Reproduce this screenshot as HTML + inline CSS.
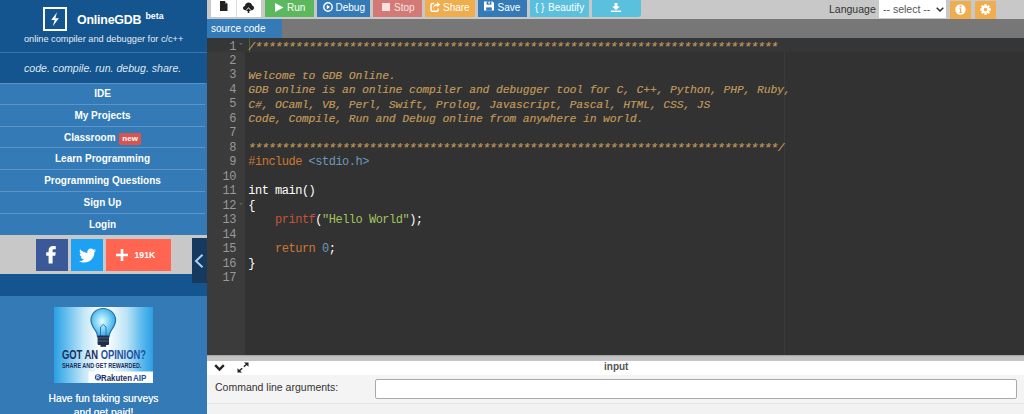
<!DOCTYPE html>
<html><head><meta charset="utf-8">
<style>
*{box-sizing:border-box;margin:0;padding:0}
html,body{width:1024px;height:414px;overflow:hidden;background:#f4f4f4;font-family:"Liberation Sans",sans-serif}
.a{position:absolute}
svg{display:block}
#sb{left:0;top:0;width:207px;height:414px;background:#337ab7}
#hdr{left:0;top:0;width:207px;height:83px;background:#14558f}
#sep{left:0;top:52px;width:207px;height:1px;background:#3a76ad}
.logo{left:43px;top:7px;width:24px;height:24px;border:2px solid #fff}
.title{left:77px;top:12.5px;color:#fff;font-weight:bold;font-size:12.4px;letter-spacing:-0.2px;white-space:nowrap;line-height:15.5px}
.beta{left:145.5px;top:11px;color:#fff;font-weight:bold;font-size:8.8px;line-height:10px}
.sub{left:24px;top:33.5px;color:#e6ecf2;font-size:9.2px;white-space:nowrap;line-height:11px}
.slogan{left:24px;top:61.8px;color:#dfe7ef;font-style:italic;font-size:10.6px;white-space:nowrap;line-height:12px}
.mi{position:absolute;left:0;width:205px;color:#fff;font-weight:bold;font-size:10px;text-align:center;border-top:1px solid #5d95c8;line-height:21.6px}
.new{display:inline-block;background:#d9534f;color:#fff;font-size:8px;line-height:12px;height:12px;width:22px;text-align:center;border-radius:1px;vertical-align:0px;margin-left:3.5px}
#gray{left:0;top:235px;width:207px;height:39px;background:#c8c8c8}
#dband{left:0;top:274px;width:207px;height:22px;background:#14558f}
#collapse{left:192px;top:237.5px;width:15px;height:45px;background:#163a5e}
#tb{left:207px;top:0;width:817px;height:19px;background:#c8c8c8}
.btn{position:absolute;top:0;height:17px;color:#fff;font-size:10px;white-space:nowrap;line-height:15.5px}
.btn span{position:absolute;top:0}
.btn svg{position:absolute}
#tabrow{left:207px;top:19px;width:817px;height:19px;background:#777}
#tab{left:207px;top:19px;width:75px;height:19px;background:#337ab7;color:#fff;font-size:10px;line-height:19px;padding-left:4px}
#ed{left:207px;top:38px;width:817px;height:317px;background:#323232}
#gut{left:207px;top:38px;width:38px;height:317px;background:#3b3b3b}
#al{left:245px;top:38px;width:779px;height:14.47px;background:#353637}
#gal{left:207px;top:38px;width:38px;height:14.47px;background:#353637}
#pm{left:784px;top:38px;width:1px;height:317px;background:#3b3b3b}
#cursor{left:249px;top:38px;width:1px;height:14px;background:#91ff00;opacity:.22}
.code{position:absolute;left:248.3px;top:39.5px;font-family:"Liberation Mono",monospace;font-size:12px;letter-spacing:-0.5px;line-height:14.47px;color:#fff;white-space:pre}
.ln{position:absolute;left:207px;top:39.5px;width:29px;text-align:right;font-family:"Liberation Mono",monospace;font-size:12px;letter-spacing:-0.5px;line-height:14.47px;color:#999;white-space:pre}
.c{color:#bc9458;font-style:italic;font-size:11.2px;letter-spacing:-0.02px;position:relative;top:0.5px;text-shadow:0.3px 0 0 rgba(188,148,88,.6)}
.k{color:#cc7833}
.n{color:#6c99bb}
.s{color:#a5c261}
.f{color:#c2553a}
.st{font-size:13.5px;letter-spacing:-1.4px;position:relative;top:1px;left:-0.7px}
.fold{position:absolute;left:239px;width:0;height:0;border-left:2.5px solid transparent;border-right:2.5px solid transparent;border-top:2.5px solid #626255}
#bar{left:207px;top:355px;width:817px;height:6px;background:linear-gradient(#9c9c9c,#c4c4c4 30%,#c4c4c4)}
#ihdr{left:207px;top:361px;width:817px;height:14px;background:#fff}
#ibody{left:207px;top:375px;width:817px;height:28px;background:#f4f4f4}
#iline{left:207px;top:403px;width:817px;height:1px;background:#e3e3e3}
#ibot{left:207px;top:404px;width:817px;height:10px;background:#f2f2f2}
.inp{left:375px;top:379px;width:642px;height:20px;background:#fff;border:1px solid #a9a9a9;border-radius:2px}
</style></head><body>
<div id="sb" class="a"></div>
<div id="hdr" class="a"></div>
<div id="sep" class="a"></div>
<div class="a logo"><svg width="20" height="20" viewBox="0 0 20 20"><path d="M12 3.3 L6.2 11 L9.6 11 L7.8 17.2 L13.9 9.2 L10.4 9.2 Z" fill="#fff"/></svg></div>
<div class="a title">OnlineGDB</div>
<div class="a beta">beta</div>
<div class="a sub">online compiler and debugger for c/c++</div>
<div class="a slogan">code. compile. run. debug. share.</div>

<div class="mi" style="top:83px;height:21px;line-height:20px">IDE</div>
<div class="mi" style="top:104px;height:22px">My Projects</div>
<div class="mi" style="top:126px;height:21px">Classroom<span class="new">new</span></div>
<div class="mi" style="top:147px;height:22px">Learn Programming</div>
<div class="mi" style="top:169px;height:22px">Programming Questions</div>
<div class="mi" style="top:191px;height:22px">Sign Up</div>
<div class="mi" style="top:213px;height:22px">Login</div>

<div id="gray" class="a"></div>
<div class="a" style="left:36px;top:239px;width:32px;height:32px;background:#3b5998">
 <svg width="32" height="32" viewBox="0 0 32 32"><path d="M12.6 24.5 V16.8 H10.2 V13.3 H12.6 V11.4 C12.6 8.6 14.3 7 17 7 C18.3 7 19.3 7.1 19.8 7.2 V10.3 H18 C16.8 10.3 16.6 10.9 16.6 11.8 V13.3 H19.7 L19.3 16.8 H16.6 V24.5 Z" fill="#fff"/></svg>
</div>
<div class="a" style="left:71px;top:239px;width:32px;height:32px;background:#1da1f2">
 <svg width="32" height="32" viewBox="0 0 32 32"><path d="M25 11.2c-.6.3-1.3.5-2 .6.7-.4 1.3-1.1 1.5-1.9-.7.4-1.4.7-2.2.8-.6-.7-1.5-1.1-2.5-1.1-1.9 0-3.5 1.6-3.5 3.5 0 .3 0 .5.1.8-2.9-.1-5.5-1.5-7.2-3.6-.3.5-.5 1.1-.5 1.8 0 1.2.6 2.3 1.6 2.9-.6 0-1.1-.2-1.6-.4 0 1.7 1.2 3.1 2.8 3.4-.3.1-.6.1-.9.1-.2 0-.4 0-.7-.1.4 1.4 1.7 2.4 3.3 2.4-1.2.9-2.7 1.5-4.4 1.5-.3 0-.6 0-.8 0 1.6 1 3.4 1.6 5.4 1.6 6.5 0 10-5.4 10-10v-.5c.7-.5 1.3-1.1 1.7-1.8z" fill="#fff"/></svg>
</div>
<div class="a" style="left:106px;top:239px;width:64.5px;height:32px;background:#ff6550">
 <svg class="a" style="left:10px;top:10px" width="12" height="12" viewBox="0 0 12 12"><path d="M4.7 0H7.3V4.7H12V7.3H7.3V12H4.7V7.3H0V4.7H4.7Z" fill="#fff"/></svg>
 <span class="a" style="left:28.6px;top:10px;color:#fff;font-weight:bold;font-size:8.6px;line-height:12px">191K</span>
</div>
<div id="dband" class="a"></div>
<div id="collapse" class="a"><svg width="15" height="45" viewBox="0 0 15 45"><path d="M10.5 16.8 L4 23 L10.5 29.2" stroke="#a6d2f2" stroke-width="2" fill="none"/></svg></div>

<div class="a" style="left:54px;top:306.5px;width:99px;height:76px;background:linear-gradient(90deg,#2a9fe4 0%,#62bdee 12%,#c4e7f8 30%,#ffffff 48%,#f4fbfe 56%,#b9e2f6 74%,#5fbcee 88%,#2a9fe4 100%)">
 <svg class="a" style="left:0;top:0" width="99" height="76" viewBox="0 0 99 76">
  <defs><radialGradient id="bg1" cx="45%" cy="45%" r="60%"><stop offset="0" stop-color="#e6fbff"/><stop offset=".45" stop-color="#86d8f6"/><stop offset="1" stop-color="#2a9ede"/></radialGradient></defs>
  <path d="M49 1.5 C42.3 1.5 37 6.7 37 13.2 C37 18 40 21 42 24.5 C43.2 26.6 43.6 28.5 43.6 30 L55 30 C55 28.5 55.4 26.6 56.6 24.5 C58.6 21 61.6 18 61.6 13.2 C61.6 6.7 56 1.5 49 1.5Z" fill="url(#bg1)" stroke="#1f6fae" stroke-width="1.2"/>
  <path d="M46.5 30 V20 L49.3 17.5 L52 20 V30" stroke="#1f6fae" stroke-width=".9" fill="none"/>
  <rect x="43.6" y="28.5" width="11.4" height="9.5" rx="1" fill="#1e2f48"/>
  <path d="M44 31H54.6 M44 34H54.6" stroke="#5a6e8a" stroke-width=".8"/>
  <rect x="46.5" y="38" width="5.6" height="1.8" fill="#1e2f48"/>
  <text x="8" y="52" font-family="Liberation Sans" font-weight="bold" font-size="12.5" fill="#1b2f5e" textLength="84" lengthAdjust="spacingAndGlyphs"><tspan>GOT AN </tspan><tspan fill="#1f50a0">OPINION?</tspan></text>
  <text x="8" y="60.5" font-family="Liberation Sans" font-weight="bold" font-size="6.8" fill="#1b2f5e" textLength="79.5" lengthAdjust="spacingAndGlyphs">SHARE AND GET REWARDED.</text>
  <rect x="34.5" y="64.5" width="64.5" height="11.5" fill="#fff"/>
  <circle cx="44" cy="70.3" r="3.1" fill="#1f50a0"/>
  <path d="M42.8 68.5V72.3 M42.8 68.6H44.4C45.6 68.6 45.6 70.4 44.4 70.4H42.8 M44.2 70.4L45.3 72.3" stroke="#fff" stroke-width=".8" fill="none"/>
  <text x="47" y="74" font-family="Liberation Sans" font-weight="bold" font-size="9" fill="#1b2f5e" textLength="31" lengthAdjust="spacingAndGlyphs">Rakuten</text>
  <text x="79" y="74" font-family="Liberation Sans" font-weight="bold" font-size="9" fill="#1f50a0" textLength="13.5" lengthAdjust="spacingAndGlyphs">AIP</text>
 </svg>
</div>
<div class="a" style="left:0;top:391.5px;width:207px;text-align:center;color:#eef3f8;font-size:10.3px;line-height:14px;text-shadow:0 0 .3px #fff">Have fun taking surveys<br>and get paid!</div>

<div id="tb" class="a"></div>
<div class="btn" style="left:211px;width:25px;background:#fff">
 <svg style="left:9px;top:1px" width="8" height="10" viewBox="0 0 8 10"><path d="M0 0H4.8L7.5 2.8V10H0Z" fill="#222"/><path d="M5.2 0.6V2.6H7.1Z" fill="#fff" opacity=".7"/></svg>
</div>
<div class="a" style="left:236px;top:0;width:1px;height:17px;background:#ddd"></div>
<div class="btn" style="left:237px;width:24px;background:#fff">
 <svg style="left:6px;top:1.5px" width="11" height="11" viewBox="0 0 11 11"><path d="M2.3 8.2 C0.9 8.2 0 7.2 0 6 C0 4.9 0.8 4 1.9 3.9 C2.2 2 3.7 0.6 5.6 0.6 C7.4 0.6 8.8 1.9 9.1 3.6 C10.2 3.8 11 4.8 11 6 C11 7.2 10.1 8.2 8.8 8.2 H8.2 L5.5 5.2 L2.8 8.2Z" fill="#222"/><path d="M5.5 6.2 L8 9 H6.3 V11 H4.7 V9 H3 Z" fill="#222"/></svg>
</div>
<div class="btn" style="left:265px;width:49px;background:#5cb85c">
 <svg style="left:10px;top:3px" width="9" height="9" viewBox="0 0 9 9"><path d="M0 0L8.5 4.5L0 9Z" fill="#fff"/></svg>
 <span style="left:22px">Run</span>
</div>
<div class="btn" style="left:317px;width:53px;background:#337ab7">
 <svg style="left:5.5px;top:1.5px" width="10" height="10" viewBox="0 0 10 10"><circle cx="5" cy="5" r="4.2" stroke="#fff" stroke-width="1.4" fill="none"/><path d="M3.8 2.8L7 5L3.8 7.2Z" fill="#fff"/></svg>
 <span style="left:18.5px">Debug</span>
</div>
<div class="btn" style="left:373px;width:49px;background:#d47a76">
 <svg style="left:9px;top:3px" width="8" height="8" viewBox="0 0 8 8"><rect width="8" height="8" fill="#f4e1e0"/></svg>
 <span style="left:21px;color:#f6e4e3">Stop</span>
</div>
<div class="btn" style="left:425px;width:50px;background:#f0ad4e">
 <svg style="left:5px;top:1.8px" width="10.5" height="10" viewBox="0 0 10.5 10"><path d="M4.2 1.6H2.6C1.6 1.6 1 2.2 1 3.2V7.8C1 8.8 1.6 9.3 2.6 9.3H6.6C7.6 9.3 8.2 8.8 8.2 7.8V6.5" stroke="#fff" stroke-width="1.5" fill="none"/><path d="M3.3 7.2C3.6 4.8 5 3.6 7.2 3.5V5.2L10.3 2.6L7.2 0V1.7C4.6 1.9 3.2 3.9 3.3 7.2Z" fill="#fff"/></svg>
 <span style="left:18px">Share</span>
</div>
<div class="btn" style="left:478px;width:49px;background:#337ab7">
 <svg style="left:6px;top:0.5px" width="10" height="10" viewBox="0 0 10 10"><path d="M0 0.5H8.5L10 2V9.5H0Z" fill="#fff"/><rect x="2.6" y="0.5" width="4.8" height="3.2" fill="#337ab7"/><rect x="4.4" y="0.9" width="1.4" height="1.8" fill="#fff"/><rect x="2.2" y="6.4" width="5.6" height="3.1" fill="#337ab7"/></svg>
 <span style="left:19.5px">Save</span>
</div>
<div class="btn" style="left:530px;width:59px;background:#5bc0de">
 <span style="left:5px">{ }</span>
 <span style="left:18px">Beautify</span>
</div>
<div class="btn" style="left:592px;width:49px;background:#5bc0de;border-bottom-right-radius:3px">
 <svg style="left:19px;top:3px" width="10" height="9" viewBox="0 0 10 9"><path d="M3.5 0H6.5V3.5H9L5 7L1 3.5H3.5Z" fill="#fff"/><rect x="0" y="7.5" width="10" height="1.5" fill="#fff"/></svg>
</div>

<div class="a" style="left:829px;top:3px;color:#333;font-size:10.5px;line-height:12px">Language</div>
<div class="a" style="left:879px;top:0;width:67px;height:18px;background:#fff"></div>
<div class="a" style="left:883px;top:3px;color:#555;font-size:10.5px;line-height:12px">-- select --</div>
<svg class="a" style="left:936px;top:7px" width="8" height="5" viewBox="0 0 8 5"><path d="M0.7 0.7L4 4L7.3 0.7" stroke="#333" stroke-width="1.5" fill="none"/></svg>
<div class="a" style="left:950px;top:1px;width:21px;height:18px;background:#f0ad4e">
 <svg class="a" style="left:5px;top:3px" width="11" height="11" viewBox="0 0 11 11"><circle cx="5.5" cy="5.5" r="5.2" fill="#fff"/><circle cx="5.5" cy="2.6" r="1" fill="#f0ad4e"/><path d="M4.3 4.3H6.2V8.2H7V9H4.2V8.2H5V5.1H4.3Z" fill="#f0ad4e"/></svg>
</div>
<div class="a" style="left:975px;top:1px;width:21px;height:18px;background:#f0ad4e">
 <svg class="a" style="left:5px;top:3px" width="11" height="11" viewBox="0 0 11 11"><path d="M9.33 4.34 L10.77 4.34 L10.77 6.66 L9.33 6.66 L9.03 7.39 L10.05 8.41 L8.41 10.05 L7.39 9.03 L6.66 9.33 L6.66 10.77 L4.34 10.77 L4.34 9.33 L3.61 9.03 L2.59 10.05 L0.95 8.41 L1.97 7.39 L1.67 6.66 L0.23 6.66 L0.23 4.34 L1.67 4.34 L1.97 3.61 L0.95 2.59 L2.59 0.95 L3.61 1.97 L4.34 1.67 L4.34 0.23 L6.66 0.23 L6.66 1.67 L7.39 1.97 L8.41 0.95 L10.05 2.59 L9.03 3.61Z" fill="#fff"/><circle cx="5.5" cy="5.5" r="1.7" fill="#f0ad4e"/></svg>
</div>

<div id="tabrow" class="a"></div>
<div id="tab" class="a">source code</div>
<div id="ed" class="a"></div>
<div id="gut" class="a"></div>
<div id="pm" class="a"></div>
<div id="gal" class="a"></div>
<div id="al" class="a"></div>
<div class="ln">1
2
3
4
5
6
7
8
9
10
11
12
13
14
15
16
17</div>
<div class="fold" style="top:43px"></div>
<div class="fold" style="top:202.8px"></div>
<div class="code"><span class="c">/<span class="st">******************************************************************************</span>
</span>
<span class="c">Welcome to GDB Online.
GDB online is an online compiler and debugger tool for C, C++, Python, PHP, Ruby, 
C#, OCaml, VB, Perl, Swift, Prolog, Javascript, Pascal, HTML, CSS, JS
Code, Compile, Run and Debug online from anywhere in world.

<span class="st">*******************************************************************************</span>/</span>
<span class="k">#include</span> <span class="n">&lt;stdio.h&gt;</span>

int main()
{
    <span class="f">printf</span>(<span class="s">"Hello World"</span>);

    <span class="k">return</span> <span class="n">0</span>;
}
</div>
<div id="cursor" class="a"></div>

<div id="bar" class="a"></div>
<div id="ihdr" class="a"></div>
<svg class="a" style="left:214px;top:364px" width="11" height="8" viewBox="0 0 11 8"><path d="M1.2 1.2L5.5 5.5L9.8 1.2" stroke="#222" stroke-width="2.4" fill="none"/></svg>
<svg class="a" style="left:237px;top:362px" width="12" height="11" viewBox="0 0 12 11"><path d="M2 9L5.2 6.2 M6.8 4.8L10 2" stroke="#222" stroke-width="1.4"/><path d="M7 0.5H11.5V4.8Z M0.5 6.2V10.5H5Z" fill="#222"/></svg>
<div class="a" style="left:604px;top:361px;color:#555;font-weight:bold;font-size:10px;line-height:11px">input</div>
<div id="ibody" class="a"></div>
<div class="a" style="left:215px;top:381px;color:#333;font-size:10.5px;line-height:12px">Command line arguments:</div>
<div class="a inp"></div>
<div id="iline" class="a"></div>
<div id="ibot" class="a"></div>
</body></html>
